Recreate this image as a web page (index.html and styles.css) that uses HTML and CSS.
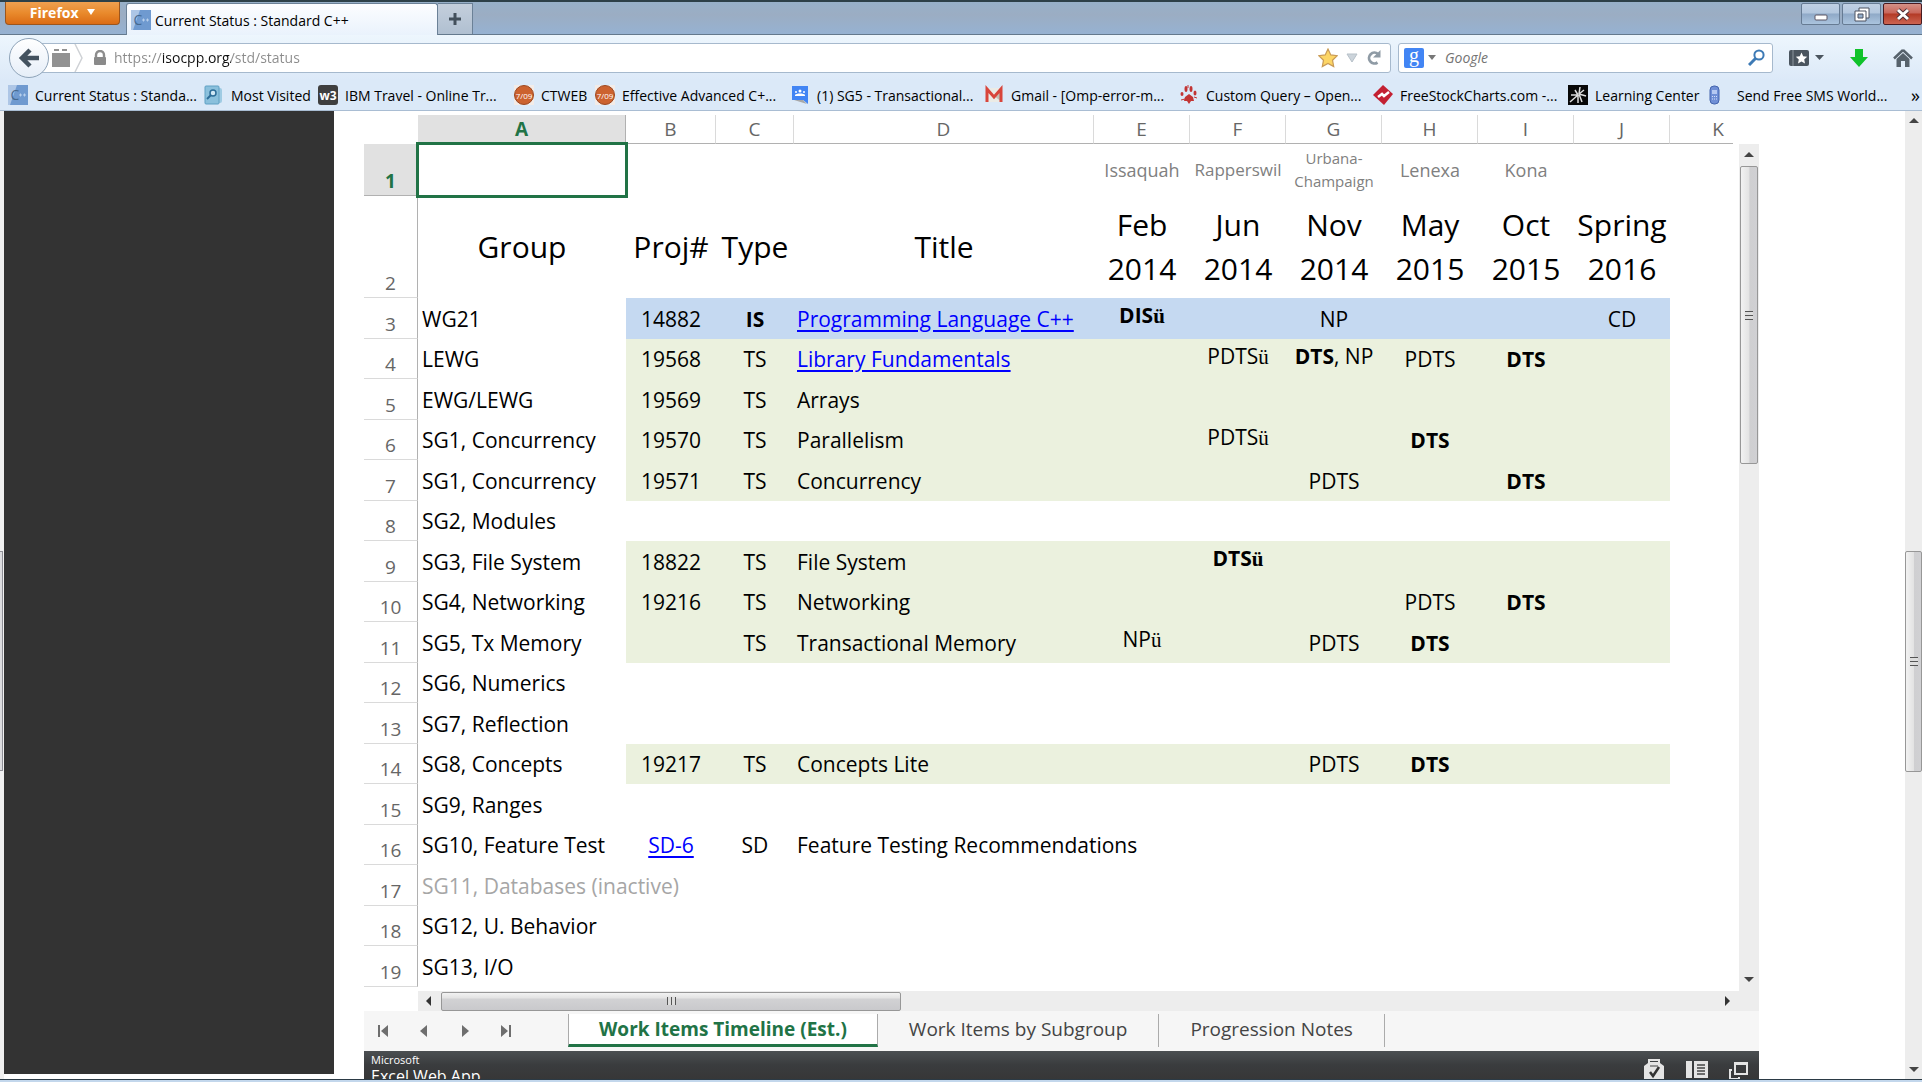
FILE: index.html
```html
<!DOCTYPE html>
<html lang="en">
<head>
  <meta charset="UTF-8">
  <title>Current Status : Standard C++</title>
  <link rel="stylesheet" href="styles.css">
</head>
<body>

<!-- TITLE BAR -->
<header class="titlebar">
  <button class="firefox" type="button">Firefox <span class="caret"></span></button>
  <div class="tab">
    <svg class="icon" viewBox="0 0 20 20"><use href="#cpp"/></svg>
    <span>Current Status : Standard C++</span>
  </div>
  <button class="newtab" type="button" aria-label="New tab">
    <svg width="14" height="14" viewBox="0 0 14 14"><path d="M7 1v12M1 7h12" stroke="#43505c" stroke-width="3"/></svg>
  </button>
  <div class="winbuttons">
    <button type="button" aria-label="Minimize">
      <svg width="38" height="22" viewBox="0 0 38 22"><rect x="13" y="11" width="12" height="5" rx="1" fill="#fff" stroke="#5a5563"/></svg>
    </button>
    <button type="button" aria-label="Restore">
      <svg width="38" height="22" viewBox="0 0 38 22"><path fill-rule="evenodd" fill="#fff" stroke="#4d5360" d="M16 4h10v10h-3v3H12V7h4zM15 10v4h5v-4z"/><path d="M16 7h7v7" fill="none" stroke="#4d5360"/></svg>
    </button>
    <button type="button" class="close" aria-label="Close">
      <svg width="38" height="22" viewBox="0 0 38 22"><path d="M14 6l10 9M24 6l-10 9" stroke="#4d3038" stroke-width="5"/><path d="M14 6l10 9M24 6l-10 9" stroke="#fff" stroke-width="3"/></svg>
    </button>
  </div>
</header>

<!-- ADDRESS AND SEARCH -->
<nav class="toolbar">
  <button class="back" type="button" aria-label="Back">
    <svg width="24" height="24" viewBox="0 0 24 24"><path d="M13 4L5 12l8 8M6 12h16" fill="none" stroke="#43525f" stroke-width="4.5"/></svg>
  </button>
  <div class="urlbar">
    <svg width="18" height="18" viewBox="0 0 18 18"><path d="M0 4h18v14H0zM2 0h5v2H2zM10 0h5v2h-5z" fill="#929292"/></svg>
    <svg width="10" height="28" viewBox="0 0 10 28"><path d="M1 0l7 14-7 14" fill="none" stroke="#cfd2d6" stroke-width="1.5"/></svg>
    <svg class="lock" width="14" height="16" viewBox="0 0 14 16"><path d="M3 8V5a4 4 0 0 1 8 0v3" fill="none" stroke="#8d8d8d" stroke-width="2.4"/><rect x="1" y="7" width="12" height="8" rx="1" fill="#8a8a8a"/></svg>
    <input class="url" type="text" aria-label="Address" value="https://isocpp.org/std/status">
    <button type="button" aria-label="Bookmark this page">
      <svg width="20" height="20" viewBox="0 0 20 20"><path d="M10 1l2.8 5.9 6.4.8-4.700 4.500 1.200 6.400L10 15.500l-5.700 3.100 1.200-6.400L.8 7.700l6.400-.8z" fill="#fcd565" stroke="#c99b55" stroke-width="1.2"/></svg>
    </button>
    <button type="button" aria-label="History">
      <svg width="12" height="10" viewBox="0 0 12 10"><path d="M1 1h10L6 9z" fill="#ccd4db" stroke="#b7c1c9"/></svg>
    </button>
    <button type="button" aria-label="Reload">
      <svg width="16" height="16" viewBox="0 0 16 16"><path d="M11.500 12.500a5.400 5.400 0 1 1 .5-8.500" fill="none" stroke="#8f9ba5" stroke-width="2.800"/><path d="M14.500 0v7.500H7z" fill="#8f9ba5"/></svg>
    </button>
  </div>
  <div class="search">
    <svg width="20" height="20" viewBox="0 0 20 20"><rect width="20" height="20" rx="2" fill="#4285f4"/><text x="10" y="14" text-anchor="middle" class="glyph g">g</text></svg>
    <svg width="8" height="5" viewBox="0 0 8 5"><path d="M0 0h8L4 5z" fill="#777"/></svg>
    <input type="text" aria-label="Search" placeholder="Google">
    <svg width="17" height="17" viewBox="0 0 17 17"><circle cx="11" cy="6" r="4.600" fill="none" stroke="#3d7ab5" stroke-width="2"/><path d="M7.500 9.500L1 16" stroke="#3d7ab5" stroke-width="3"/></svg>
  </div>
  <div class="tools">
    <button type="button" aria-label="Bookmarks">
      <svg width="35" height="18" viewBox="0 0 35 18"><rect x="0" y="1" width="20" height="16" rx="2" fill="#4b555f"/><path d="M4 1v16" stroke="#8d969e"/><path d="M12.500 3.500l1.700 3.700 4 .5-3 2.700.8 4-3.500-2-3.500 2 .8-4-3-2.700 4-.5z" fill="#fff"/><path d="M26 6h9l-4.500 5z" fill="#4b555f"/></svg>
    </button>
    <button type="button" aria-label="Downloads">
      <svg width="18" height="18" viewBox="0 0 18 18"><path d="M5 0h8v8h5l-9 10L0 8h5z" fill="#0fc22a"/></svg>
    </button>
    <button type="button" aria-label="Home">
      <svg width="20" height="18" viewBox="0 0 20 18"><path d="M10 1L1 9.500M10 1l9 8.500" stroke="#57626c" stroke-width="2.500" fill="none"/><path d="M3.500 10L10 4l6.500 6v8h-4.500v-6H8v6H3.500z" fill="#57626c"/></svg>
    </button>
  </div>
</nav>

<!-- BOOKMARKS -->
<nav class="bookmarks">
  <a href="#"><svg class="icon" viewBox="0 0 20 20"><g id="cpp"><rect width="20" height="20" fill="#6f9ad0"/><path d="M0 0h9L2 20H0z" fill="#adc6e6"/><text x="7" y="15" text-anchor="middle" class="glyph cee">C</text><path d="M11 10h3M12.500 8.500v3M15 10h3M16.500 8.500v3" stroke="#b9d0ec"/></g></svg>Current Status : Standa...</a>
  <a href="#"><svg class="icon" viewBox="0 0 20 20"><rect x="5" y="3" width="13" height="15" rx="2" fill="#9fcbe3"/><rect x="1" y="1" width="14" height="18" rx="1" fill="#8ac0dc" stroke="#5ea0c3"/><circle cx="9" cy="8" r="3" fill="#cfe8f5" stroke="#2c6d98" stroke-width="1.500"/><path d="M7 10l-4 4" stroke="#2c6d98" stroke-width="2"/></svg>Most Visited</a>
  <a href="#"><svg class="icon" viewBox="0 0 20 20"><rect width="20" height="20" rx="3" fill="#3f3f3f"/><text x="10" y="15" text-anchor="middle" class="glyph w3">w3</text></svg>IBM Travel - Online Tr...</a>
  <a href="#"><svg class="icon" viewBox="0 0 20 20"><g id="badge"><rect width="20" height="20" fill="#f3ece8"/><circle cx="10" cy="10" r="9.500" fill="#cc622f" stroke="#994722"/><text x="10" y="14" text-anchor="middle" class="glyph date">7/09</text></g></svg>CTWEB</a>
  <a href="#"><svg class="icon" viewBox="0 0 20 20"><use href="#badge"/></svg>Effective Advanced C+...</a>
  <a href="#"><svg class="icon" viewBox="0 0 20 20"><path d="M2 1h16v18l-5-4H2z" fill="#4285f4"/><path d="M4 15h9l4 4z" fill="#a8a8a8"/><path d="M5 10c1-2 9-2 10 0v1H5z" fill="#fff"/><circle cx="10" cy="6" r="1.500" fill="#fff"/><circle cx="6" cy="7" r="1" fill="#fff"/><circle cx="14" cy="7" r="1" fill="#fff"/></svg>(1) SG5 - Transactional...</a>
  <a href="#"><svg class="icon" viewBox="0 0 20 20"><path d="M2 3h16v14H2z" fill="#ebebe6"/><path d="M10 11l8 6V3z" fill="#c3bfb4"/><path d="M3 17V4l7 8 7-8v13" fill="none" stroke="#d8453b" stroke-width="3"/></svg>Gmail - [Omp-error-m...</a>
  <a href="#"><svg class="icon" viewBox="0 0 20 20"><g fill="#c23434"><ellipse cx="7" cy="4" rx="1.500" ry="3"/><ellipse cx="12" cy="4" rx="1.500" ry="3"/><ellipse cx="3" cy="9" rx="1.500" ry="2"/><ellipse cx="16" cy="8" rx="1.500" ry="2.500"/><path d="M6 12l4-3 4 3 1 4-3 0-2 3-2-3-3 0z"/></g><path d="M9 0v3M18 13l-3-1M2 15l4-1" stroke="#c23434"/></svg>Custom Query – Open...</a>
  <a href="#"><svg class="icon" viewBox="0 0 20 20"><path d="M10 0l10 9-9 11L0 10z" fill="#c32032"/><path d="M5 12l4-3 2 2 5-4" fill="none" stroke="#fff" stroke-width="2.500"/></svg>FreeStockCharts.com -...</a>
  <a href="#"><svg class="icon" viewBox="0 0 20 20"><rect width="20" height="20" fill="#080808"/><path d="M11 9l1-7M11 9l5-4M11 9l7 2M11 9l3 8M10 10v8M10 10l-8 7M10 10H3M10 10L7 5" stroke="#ddd" stroke-width="1.500"/></svg>Learning Center</a>
  <a href="#"><svg class="icon" viewBox="0 0 20 20"><rect x="5" y="1" width="9" height="18" rx="4" fill="#6f8fd6" stroke="#4465ae"/><path d="M7 5h5v4H7z" fill="#b5c9f2"/><path d="M7 11.500h5M7 14h5" stroke="#d5e0fa" stroke-dasharray="1 1"/></svg><span class="wide">Send Free SMS World...</span></a>
  <button type="button" aria-label="More bookmarks">»</button>
</nav>

<!-- PAGE -->
<main class="page">
  <div class="leftedge"><div class="leftthumb"></div></div>
  <aside class="sidebar"></aside>

  <section class="excel">
    <div class="grid">
      <div class="sheet">
        <table>
          <colgroup>
            <col class="num"><col class="ca"><col class="cb"><col class="cc"><col class="cd">
            <col class="ce"><col class="ce"><col class="ce"><col class="ce"><col class="ce"><col class="ce"><col class="ce">
          </colgroup>
          <thead>
            <tr>
              <td class="corner"></td><th class="on">A</th><th>B</th><th>C</th><th>D</th><th>E</th><th>F</th><th>G</th><th>H</th><th>I</th><th>J</th><th class="last">K</th>
            </tr>
          </thead>
          <tbody>
            <tr class="places"><th class="on">1</th><td class="selected"></td><td></td><td></td><td></td><td>Issaquah</td><td class="fit">Rapperswil</td><td class="small">Urbana-<br>Champaign</td><td>Lenexa</td><td>Kona</td><td></td><td></td></tr>
            <tr class="heads"><th>2</th><td>Group</td><td>Proj#</td><td>Type</td><td>Title</td><td>Feb<br>2014</td><td>Jun<br>2014</td><td>Nov<br>2014</td><td>May<br>2015</td><td>Oct<br>2015</td><td>Spring<br>2016</td><td></td></tr>
            <tr class="is"><th>3</th><td>WG21</td><td>14882</td><td><b>IS</b></td><td><a href="#">Programming Language C++</a></td><td class="up"><b>DIS<i>ü</i></b></td><td></td><td>NP</td><td></td><td></td><td>CD</td><td></td></tr>
            <tr class="ts"><th>4</th><td>LEWG</td><td>19568</td><td>TS</td><td><a href="#">Library Fundamentals</a></td><td></td><td class="up">PDTS<i>ü</i></td><td class="up"><b>DTS</b>, NP</td><td>PDTS</td><td><b>DTS</b></td><td></td><td></td></tr>
            <tr class="ts"><th>5</th><td>EWG/LEWG</td><td>19569</td><td>TS</td><td>Arrays</td><td></td><td></td><td></td><td></td><td></td><td></td><td></td></tr>
            <tr class="ts"><th>6</th><td>SG1, Concurrency</td><td>19570</td><td>TS</td><td>Parallelism</td><td></td><td class="up">PDTS<i>ü</i></td><td></td><td><b>DTS</b></td><td></td><td></td><td></td></tr>
            <tr class="ts"><th>7</th><td>SG1, Concurrency</td><td>19571</td><td>TS</td><td>Concurrency</td><td></td><td></td><td>PDTS</td><td></td><td><b>DTS</b></td><td></td><td></td></tr>
            <tr><th>8</th><td>SG2, Modules</td><td></td><td></td><td></td><td></td><td></td><td></td><td></td><td></td><td></td><td></td></tr>
            <tr class="ts"><th>9</th><td>SG3, File System</td><td>18822</td><td>TS</td><td>File System</td><td></td><td class="up"><b>DTS<i>ü</i></b></td><td></td><td></td><td></td><td></td><td></td></tr>
            <tr class="ts"><th>10</th><td>SG4, Networking</td><td>19216</td><td>TS</td><td>Networking</td><td></td><td></td><td></td><td>PDTS</td><td><b>DTS</b></td><td></td><td></td></tr>
            <tr class="ts"><th>11</th><td>SG5, Tx Memory</td><td></td><td>TS</td><td>Transactional Memory</td><td class="up">NP<i>ü</i></td><td></td><td>PDTS</td><td><b>DTS</b></td><td></td><td></td><td></td></tr>
            <tr><th>12</th><td>SG6, Numerics</td><td></td><td></td><td></td><td></td><td></td><td></td><td></td><td></td><td></td><td></td></tr>
            <tr><th>13</th><td>SG7, Reflection</td><td></td><td></td><td></td><td></td><td></td><td></td><td></td><td></td><td></td><td></td></tr>
            <tr class="ts"><th>14</th><td>SG8, Concepts</td><td>19217</td><td>TS</td><td>Concepts Lite</td><td></td><td></td><td>PDTS</td><td><b>DTS</b></td><td></td><td></td><td></td></tr>
            <tr><th>15</th><td>SG9, Ranges</td><td></td><td></td><td></td><td></td><td></td><td></td><td></td><td></td><td></td><td></td></tr>
            <tr><th>16</th><td>SG10, Feature Test</td><td><a href="#">SD-6</a></td><td>SD</td><td>Feature Testing Recommendations</td><td></td><td></td><td></td><td></td><td></td><td></td><td></td></tr>
            <tr class="inactive"><th>17</th><td>SG11, Databases (inactive)</td><td></td><td></td><td></td><td></td><td></td><td></td><td></td><td></td><td></td><td></td></tr>
            <tr><th>18</th><td>SG12, U. Behavior</td><td></td><td></td><td></td><td></td><td></td><td></td><td></td><td></td><td></td><td></td></tr>
            <tr><th>19</th><td>SG13, I/O</td><td></td><td></td><td></td><td></td><td></td><td></td><td></td><td></td><td></td><td></td></tr>
          </tbody>
        </table>
      </div>
      <div class="vscroll">
        <span class="arrow up-arrow"></span>
        <div class="thumb"><span class="grip"></span></div>
        <span class="arrow down-arrow"></span>
      </div>
    </div>

    <div class="hscroll">
      <span class="arrow left-arrow"></span>
      <div class="thumb"><span class="grip"></span></div>
      <span class="arrow right-arrow"></span>
    </div>

    <div class="sheettabs">
      <div class="pager">
        <button type="button" aria-label="First sheet"><svg width="12" height="12" viewBox="0 0 12 12"><path d="M1 0h2v12H1zM11 0v12L4 6z" fill="#6e6e6e"/></svg></button>
        <button type="button" aria-label="Previous sheet"><svg width="12" height="12" viewBox="0 0 12 12"><path d="M9 0v12L2 6z" fill="#6e6e6e"/></svg></button>
        <button type="button" aria-label="Next sheet"><svg width="12" height="12" viewBox="0 0 12 12"><path d="M3 0v12l7-6z" fill="#6e6e6e"/></svg></button>
        <button type="button" aria-label="Last sheet"><svg width="12" height="12" viewBox="0 0 12 12"><path d="M9 0h2v12H9zM1 0v12l7-6z" fill="#6e6e6e"/></svg></button>
      </div>
      <button type="button" class="current">Work Items Timeline (Est.)</button>
      <button type="button">Work Items by Subgroup</button>
      <button type="button">Progression Notes</button>
    </div>

    <footer class="appbar">
      <div class="brand"><small>Microsoft</small>Excel Web App</div>
      <div class="appicons">
        <svg width="22" height="22" viewBox="0 0 22 22"><path d="M1 8l4-3h12l4 3v14H1z" fill="#e4e4e4"/><path d="M6 8V2h10v6M6 5h10" fill="none" stroke="#e4e4e4" stroke-width="2"/><path d="M7 8h8" stroke="#444"/><path d="M7 14l3 4 6-9" fill="none" stroke="#333" stroke-width="2.500"/></svg>
        <svg width="22" height="22" viewBox="0 0 22 22"><path d="M0 3h6v17H0zM8 3h14v17H8z" fill="#e4e4e4"/><path d="M11 7h8M11 10h8M11 13h8M11 16h8" stroke="#444" stroke-width="1.500"/></svg>
        <svg width="20" height="22" viewBox="0 0 20 22"><path d="M6 5h12v11H6z" fill="none" stroke="#e4e4e4" stroke-width="2"/><path d="M6 4h12v3H6z" fill="#e4e4e4"/><path d="M3 12H1v9h9v-2" fill="none" stroke="#e4e4e4" stroke-width="2"/></svg>
      </div>
    </footer>
  </section>

  <div class="pagescroll">
    <span class="arrow up-arrow"></span>
    <div class="thumb"><span class="grip"></span></div>
    <span class="arrow down-arrow"></span>
  </div>
</main>

<div class="bottomedge"></div>

</body>
</html>
```
FILE: styles.css
```css
* {
  box-sizing: border-box;
}
body {
  margin: 0;
  height: 100vh;
  display: flex;
  flex-direction: column;
  overflow: hidden;
  background: #fff;
  color: #000;
  font-family: "Open Sans", "Segoe UI", sans-serif;
  font-size: 14px;
}
button {
  font: inherit;
  color: inherit;
  border: 0;
  padding: 0;
  background: none;
}
button svg {
  display: block;
}
.icon {
  width: 20px;
  height: 20px;
  flex: none;
}
.glyph {
  fill: #fff;
  font-family: "Open Sans", sans-serif;
}
.g {
  font: 20px "Liberation Serif", serif;
}
.cee {
  font-size: 14px;
  fill: #45698f;
}
.w3 {
  font-size: 12px;
  font-weight: bold;
}
.date {
  font-size: 8px;
}

/* title bar */
.titlebar {
  display: flex;
  flex: none;
  height: 35px;
  border-top: 2px solid #2d4048;
  border-bottom: 1px solid #64798d;
  background: linear-gradient(#97b0c9, #9badc3 40%, #96b2d2);
}
.firefox {
  width: 115px;
  height: 23px;
  margin: 0 6px 0 5px;
  border: 1px solid #9b551d;
  border-top: 0;
  border-radius: 0 0 4px 4px;
  background: linear-gradient(#efa050, #e98a2c 50%, #db6b14);
  color: #fff;
  font-weight: bold;
  line-height: 22px;
}
.caret {
  display: inline-block;
  margin: 0 0 3px 5px;
  border: 4px solid transparent;
  border-top: 6px solid #fff;
  border-bottom: 0;
}
.tab {
  display: flex;
  align-items: center;
  gap: 4px;
  width: 312px;
  height: 33px;
  margin-top: 1px;
  padding-left: 4px;
  border: 1px solid #6b8197;
  border-bottom: 0;
  border-radius: 3px 3px 0 0;
  background: linear-gradient(#fcfdff, #e9f2fc);
}
.newtab {
  display: flex;
  align-items: center;
  justify-content: center;
  width: 35px;
  margin-top: 1px;
  border: 1px solid #6b8197;
  border-left: 0;
  border-bottom: 0;
  background: linear-gradient(#c4cfdc, #b0c0d1);
}
.winbuttons {
  display: flex;
  gap: 2px;
  margin-left: auto;
}
.winbuttons button {
  width: 39px;
  height: 22px;
  margin-top: 1px;
  border: 1px solid #667b93;
  border-radius: 2px;
  overflow: hidden;
  background: linear-gradient(#c0d0e3, #b3c7de 45%, #8fa9c7 50%, #abc4de);
}
.winbuttons .close {
  border-color: #481b21;
  background: linear-gradient(#d49187, #c9665a 45%, #b33a26 50%, #cd6450);
}

/* address bar */
.toolbar {
  display: flex;
  flex: none;
  align-items: center;
  height: 45px;
  padding: 0 9px;
  background: linear-gradient(#edf6fd, #dce9f8);
}
.back {
  display: flex;
  align-items: center;
  justify-content: center;
  width: 40px;
  height: 40px;
  z-index: 1;
  border: 1px solid #8ea3b8;
  border-radius: 50%;
  background: linear-gradient(#fff, #e6eef8);
}
.urlbar,
.search {
  display: flex;
  align-items: center;
  height: 30px;
  border: 1px solid #a6b9cd;
  border-radius: 3px;
  background: #fff;
}
.urlbar {
  flex: 1;
  gap: 4px;
  margin-left: -10px;
  padding: 0 8px 0 12px;
}
.urlbar button {
  margin-left: 4px;
}
.lock {
  margin: 0 3px 0 5px;
}
input {
  flex: 1;
  min-width: 0;
  padding: 0;
  border: 0;
  outline: 0;
  font: inherit;
  background: none;
}
/* the host name is darker than the rest of the address */
.url {
  color: transparent;
  background: linear-gradient(90deg, #8b8b8b 48px, #111 48px, #111 117px, #8b8b8b 117px);
  background-clip: text;
  -webkit-background-clip: text;
}
.search {
  width: 375px;
  gap: 4px;
  margin-left: 7px;
  padding: 0 7px 0 5px;
}
.search input {
  margin-left: 5px;
}
.search input::placeholder {
  color: #737373;
  font-style: italic;
}
.tools {
  display: flex;
  justify-content: space-between;
  width: 124px;
  margin-left: 16px;
}

/* bookmarks */
.bookmarks {
  display: grid;
  grid-template-columns: 196px 114px 196px 81px 195px 194px 195px 194px 195px 137px 1fr auto;
  align-items: center;
  flex: none;
  height: 31px;
  padding: 0 2px 0 8px;
  border-bottom: 1px solid #a9bdd3;
  background: #dbe9f8;
  white-space: nowrap;
}
.bookmarks a {
  display: flex;
  align-items: center;
  gap: 7px;
  color: #000;
  text-decoration: none;
}
.bookmarks .wide {
  padding-left: 5px;
}
.bookmarks button {
  font-size: 18px;
  line-height: 20px;
}

/* page */
.page {
  display: flex;
  flex: 1;
  min-height: 0;
}
.leftedge {
  width: 4px;
  padding-top: 440px;
  background: #f0f0f0;
}
.leftthumb {
  height: 220px;
  width: 3px;
  border: 1px solid #8f8f96;
  border-left: 0;
  background: #dcdcdf;
}
.sidebar {
  width: 330px;
  margin: 0 30px 5px 0;
  background: #333;
}
.excel {
  display: flex;
  flex: 1;
  flex-direction: column;
  min-width: 0;
  margin-right: 146px;
  padding-top: 4px;
}
.grid {
  display: flex;
  flex: 1;
  min-height: 0;
}
.sheet {
  flex: 1;
  min-width: 0;
  margin: 0 6px 4px 0;
  overflow: hidden;
}

/* sheet */
table {
  width: 1402px;
  table-layout: fixed;
  border-spacing: 0;
  font-size: 21px;
  line-height: 28px;
  white-space: nowrap;
}
.num { width: 54px; }
.ca { width: 208px; }
.cb { width: 90px; }
.cc { width: 78px; }
.cd { width: 300px; }
.ce { width: 96px; }
th,
td {
  padding: 0;
  text-align: center;
}
th {
  color: #666;
  font-size: 19px;
  font-weight: normal;
}
thead th {
  height: 29px;
  border-right: 1px solid #dadada;
  border-bottom: 1px solid #b1b1b1;
  line-height: 24px;
}
thead .last {
  border-right: 0;
}
.corner {
  border-right: 0;
}
tbody th {
  height: 41px;
  border-right: 1px solid #b1b1b1;
  border-bottom: 1px solid #dadada;
  vertical-align: bottom;
}
tbody tr:nth-child(even) th {
  height: 40px;
}
th.on {
  background: #e1e1e1;
  color: #217346;
  font-weight: bold;
  border-color: #b1b1b1;
}
tbody tr.places th {
  height: 52px;
}
tbody tr.heads:nth-child(2) th {
  height: 102px;
}
tbody td:nth-child(2),
tbody td:nth-child(5) {
  padding-left: 4px;
  text-align: left;
}
tbody td:nth-child(5) {
  padding-left: 3px;
}
.places td {
  color: #808080;
  font-size: 18px;
}
.places .fit {
  font-size: 17px;
}
.places .small {
  font-size: 15px;
  line-height: 23px;
}
tbody .heads td {
  padding-left: 0;
  text-align: center;
  font-size: 30px;
  line-height: 44px;
}
.selected {
  position: relative;
  outline: 3px solid #217346;
  outline-offset: -1px;
}
.is td:nth-child(n+3):nth-child(-n+11) {
  background: #c5d9f1;
}
.ts td:nth-child(n+3):nth-child(-n+11) {
  background: #ebf1de;
}
.up {
  padding-bottom: 6px;
}
.sheet i {
  font-family: "Liberation Serif", serif;
  font-style: normal;
}
.sheet a {
  color: #0000ff;
  text-underline-offset: 3px;
}
.inactive td {
  color: #a6a6a6;
}

/* scroll bars */
.vscroll,
.pagescroll {
  display: flex;
  flex-direction: column;
  align-items: center;
  flex: none;
  background: #ededed;
}
.vscroll {
  width: 20px;
  margin-top: 29px;
  padding: 8px 0 9px;
}
.pagescroll {
  width: 17px;
  padding: 7px 0;
}
.hscroll {
  display: flex;
  align-items: center;
  flex: none;
  height: 20px;
  margin-left: 54px;
  padding: 0 29px 0 8px;
  background: #ededed;
}
.thumb {
  display: flex;
  align-items: center;
  justify-content: center;
  border: 1px solid #979797;
  border-radius: 2px;
}
.vscroll .thumb,
.pagescroll .thumb {
  width: 18px;
  background: linear-gradient(90deg, #f2f2f2, #e3e3e3 50%, #cfcfd1 55%, #d0d0d3);
}
.vscroll .thumb {
  height: 298px;
  margin: 9px 0 auto;
}
.pagescroll .thumb {
  height: 221px;
  width: 17px;
  margin: 428px 0 auto;
}
.hscroll .thumb {
  width: 460px;
  height: 19px;
  margin: 0 auto 0 10px;
  background: linear-gradient(#f2f2f2, #e3e3e3 30%, #d2d2d4 35%, #c9c9cc);
}
.grip {
  width: 8px;
  height: 9px;
  background: repeating-linear-gradient(#555 0 1px, #ddd 1px 4px);
}
.hscroll .grip {
  width: 9px;
  height: 8px;
  background: repeating-linear-gradient(90deg, #555 0 1px, #ddd 1px 4px);
}
.arrow {
  border: 5px solid transparent;
}
.up-arrow {
  border-top: 0;
  border-bottom-color: #444;
}
.down-arrow {
  border-bottom: 0;
  border-top-color: #444;
}
.left-arrow {
  border-left: 0;
  border-right-color: #333;
}
.right-arrow {
  border-right: 0;
  border-left-color: #333;
}

/* sheet tabs */
.sheettabs {
  display: flex;
  flex: none;
  height: 40px;
  padding: 3px 0 4px;
  background: #f6f6f6;
  color: #444;
  font-size: 19px;
}
.pager {
  display: flex;
  gap: 29px;
  width: 204px;
  padding-left: 13px;
}
.sheettabs > button {
  padding: 0 31px 3px;
  border-right: 1px solid #ababab;
}
.sheettabs .current {
  padding: 0 30px;
  border-left: 1px solid #ababab;
  border-bottom: 3px solid #217346;
  background: #fff;
  color: #217346;
  font-weight: bold;
}

/* app bar */
.appbar {
  display: flex;
  justify-content: space-between;
  flex: none;
  height: 28px;
  padding: 0 10px 0 7px;
  overflow: hidden;
  background: linear-gradient(#4b4f52, #3a3c3e 50%, #373737);
  color: #fff;
  font-size: 16px;
  line-height: 16px;
}
.brand {
  padding-top: 1px;
}
.brand small {
  display: block;
  font-size: 11px;
}
.appicons {
  display: flex;
  gap: 21px;
  padding-top: 7px;
}
.bottomedge {
  flex: none;
  height: 3px;
  border-top: 1px solid #2b3a45;
  background: #c3d7ec;
}
```
